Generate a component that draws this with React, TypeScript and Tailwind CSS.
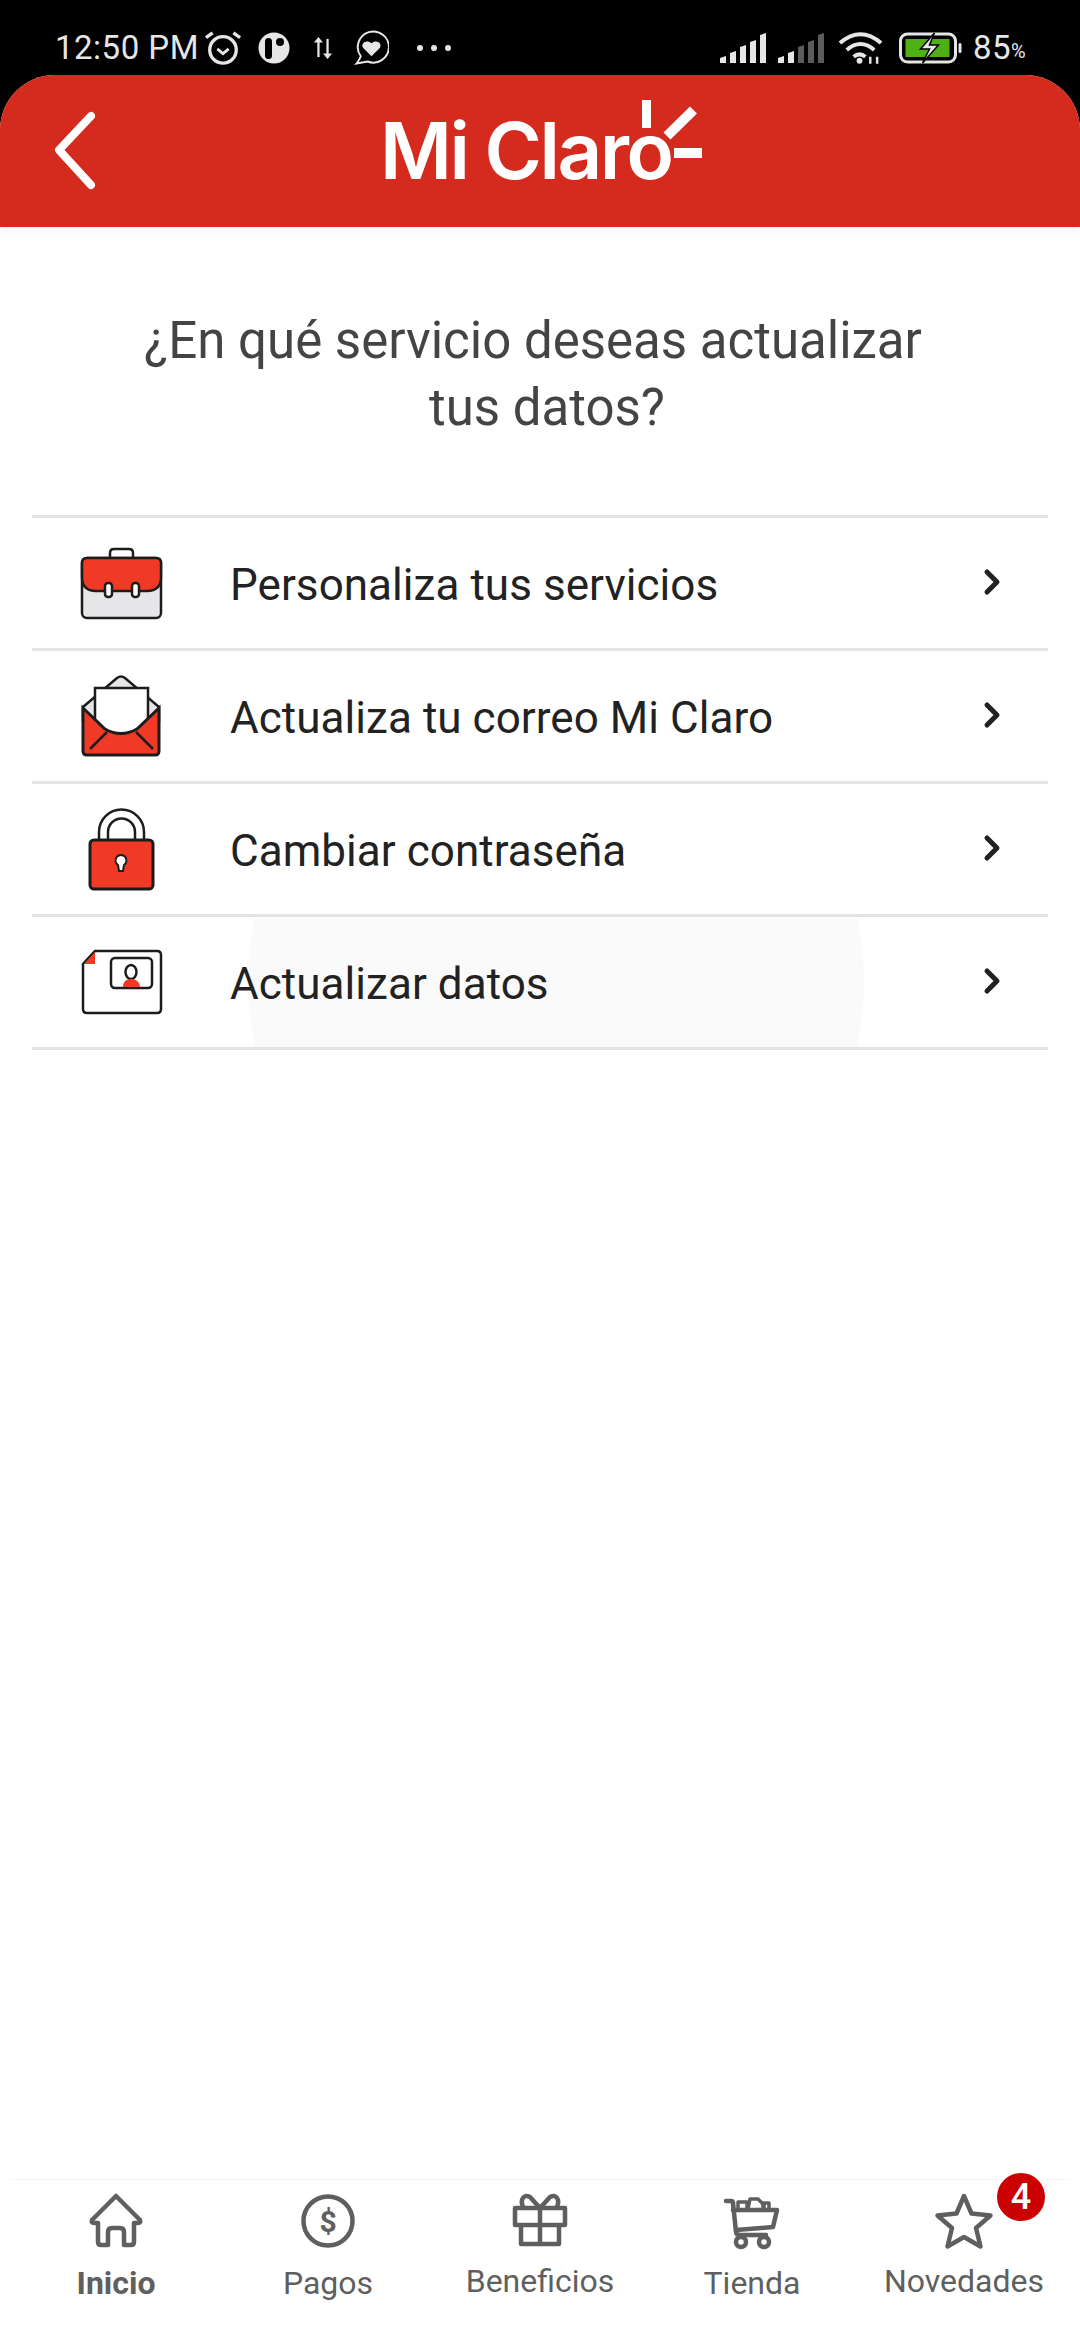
import type { ReactNode } from "react";

const RED = "#f03a26";
const INK = "#1c1c1c";

const bars = [
  { x: 0, top: 23 },
  { x: 10, top: 18 },
  { x: 20, top: 12 },
  { x: 30, top: 7 },
  { x: 40, top: 0 },
];

function Signal({ lit }: { lit: number }) {
  return (
    <svg width="46" height="30" viewBox="0 0 46 30">
      {bars.map((bar, i) => (
        <path
          key={bar.x}
          d={`M${bar.x} 30V${bar.top + 2}l6-2V30z`}
          fill={i < lit ? "#e6e6e6" : "#5c5c5c"}
        />
      ))}
    </svg>
  );
}

function StatusBar() {
  return (
    <div className="flex h-[75px] items-center bg-black pl-[55px] pt-[20px] text-[#e6e6e6]">
      <span className="w-[149px] text-[33px] leading-none tracking-[0.5px]">12:50 PM</span>
      <svg width="38" height="36" viewBox="0 0 40 38" fill="none" stroke="#e6e6e6">
        <circle cx="20" cy="21" r="14" strokeWidth="3.5" />
        <path d="M14 20l6 5 6-5" strokeWidth="3" />
        <path d="M2 8l7-5M38 8l-7-5" strokeWidth="3.5" />
      </svg>
      <svg className="ml-[16px]" width="32" height="32" viewBox="0 0 32 32">
        <circle cx="16" cy="16" r="15.5" fill="#e6e6e6" />
        <rect x="7" y="6" width="7" height="21" rx="3.5" fill="#000" />
        <circle cx="22" cy="10" r="4" fill="#000" />
      </svg>
      <svg className="ml-[23px]" width="20" height="26" viewBox="0 0 22 28" fill="none" stroke="#e6e6e6" strokeWidth="2.5">
        <path d="M6 24V4" />
        <path d="M1 8l5-6 5 6z" fill="#e6e6e6" strokeWidth="0" />
        <path d="M16 4v20" />
        <path d="M11 20l5 6 5-6z" fill="#e6e6e6" strokeWidth="0" />
      </svg>
      <svg className="ml-[21px]" width="35" height="35" viewBox="0 0 36 36" fill="none">
        <path d="M7 27A16 16 0 1 1 14 32.400L2.500 34.500Q5.500 31 7 27Z" stroke="#e6e6e6" strokeWidth="2" />
        <path d="M18 27L9.500 18.500C6.500 14 12.500 9 18 13.500C23.500 9 29.500 14 26.500 18.500Z" fill="#e6e6e6" />
      </svg>
      <div className="ml-[28px] flex gap-[8px]">
        <span className="size-[6px] rounded-full bg-[#e6e6e6]" />
        <span className="size-[6px] rounded-full bg-[#e6e6e6]" />
        <span className="size-[6px] rounded-full bg-[#e6e6e6]" />
      </div>
      <div className="ml-[269px] flex items-center">
        <Signal lit={5} />
        <span className="ml-[12px]">
          <Signal lit={2} />
        </span>
        <svg className="ml-[14px]" width="45" height="34" viewBox="0 0 46 34" fill="none" stroke="#e6e6e6" strokeWidth="4">
          <path d="M2 12Q23-6 44 12" />
          <path d="M9 19Q23 7 37 19" />
          <path d="M16 26Q22 21 28 26" />
          <circle cx="22" cy="30" r="2" fill="#e6e6e6" strokeWidth="2" />
          <path d="M33 33v-7M40 33v-7" strokeWidth="2.500" />
        </svg>
        <svg className="ml-[15px]" width="66" height="32" viewBox="0 0 65 32">
          <rect x="2" y="2" width="55" height="28" rx="7" fill="none" stroke="#e6e6e6" strokeWidth="3" />
          <rect x="7" y="7" width="44" height="18" fill="#4fb015" />
          <path d="M36 1L22 17h9l-7 14 16-18h-9l5-12z" fill="#e6e6e6" stroke="#000" strokeWidth="1.500" />
          <rect x="60" y="11" width="3" height="10" rx="1.500" fill="#e6e6e6" />
        </svg>
        <span className="ml-[9px] text-[33px] leading-none tracking-[0.5px]">85</span>
        <span className="mt-[7px] text-[20px] leading-none">%</span>
      </div>
    </div>
  );
}

function Header() {
  return (
    <header className="relative flex h-[152px] items-center rounded-t-[55px] bg-[#d42b1e] pl-[54px] shadow-[0_4px_8px_rgba(0,0,0,0.05)]">
      <svg width="46" height="80" viewBox="0 0 46 80" fill="none" stroke="#fff" strokeWidth="8" strokeLinecap="round" strokeLinejoin="round">
        <path d="M37 5L5 39l32 35" />
      </svg>
      <div className="relative ml-[280px] font-[Inter,sans-serif] text-[78px] font-semibold leading-none tracking-[-2.500px] text-white">
        Mi Claro
        <svg className="absolute left-[260px] top-[-12px]" width="66" height="60" viewBox="0 0 66 60" fill="#fff">
          <rect x="2" y="0" width="9" height="28" />
          <path d="M53.500 10L27 36" stroke="#fff" strokeWidth="10" />
          <rect x="34" y="48" width="28" height="10" />
        </svg>
      </div>
    </header>
  );
}

function IconBriefcase() {
  return (
    <svg width="90" height="90" viewBox="0 0 90 90" fill="none" stroke={INK} strokeWidth="2.500">
      <path d="M33 19v-4q0-4 4-4h15q4 0 4 4v4" fill="#fff" />
      <rect x="5" y="20" width="79" height="60" rx="5" fill="#e6e5e8" />
      <path d="M5 25q0-5 5-5h69q5 0 5 5v14q0 14-14 14H19Q5 53 5 39z" fill={RED} />
      <rect x="28" y="45" width="7" height="14" rx="3" fill="#fff" />
      <rect x="55" y="45" width="7" height="14" rx="3" fill="#fff" />
    </svg>
  );
}

function IconEnvelope() {
  return (
    <svg width="90" height="90" viewBox="0 0 90 90" fill="none" stroke={INK} strokeWidth="2.500">
      <path d="M6 36L40 7q4-3 8 0l34 29v14H6z" fill="#e6e5e8" />
      <path d="M18 17h53v52H18z" fill="#fff" />
      <path d="M6 37l22 21q16 9 32 0l22-21v43q0 4-4 4H10q-4 0-4-4z" fill={RED} stroke={INK} strokeWidth="3" />
      <path d="M13 78l17-17M76 78L59 61" strokeWidth="2.500" />
    </svg>
  );
}

function IconLock() {
  return (
    <svg width="90" height="90" viewBox="0 0 90 90" fill="none" stroke={INK} strokeWidth="2.500">
      <path d="M22 36V28a22 22 0 0 1 45 0v8" fill="#fff" />
      <path d="M31 36V28a13.500 13.500 0 0 1 27 0v8" />
      <rect x="13" y="36" width="63" height="49" rx="4" fill={RED} strokeWidth="3" />
      <path d="M41 61a5.500 5.500 0 1 1 6 0l-1 6h-4z" fill="#fff" strokeWidth="2" />
    </svg>
  );
}

function IconCard() {
  return (
    <svg width="90" height="90" viewBox="0 0 90 90" fill="none" stroke={INK} strokeWidth="2.500">
      <path d="M18 14h62q4 0 4 4v54q0 4-4 4H10q-4 0-4-4V27z" fill="#fff" />
      <path d="M18 15v12H7z" fill={RED} stroke="none" />
      <rect x="34" y="21" width="41" height="30" rx="4" />
      <ellipse cx="54" cy="35" rx="5.500" ry="7" />
      <path d="M46 50q0-8 8-8t9 8z" fill={RED} stroke="none" />
    </svg>
  );
}

const rows: { label: string; icon: ReactNode; ripple?: boolean }[] = [
  { label: "Personaliza tus servicios", icon: <IconBriefcase /> },
  { label: "Actualiza tu correo Mi Claro", icon: <IconEnvelope /> },
  { label: "Cambiar contraseña", icon: <IconLock /> },
  { label: "Actualizar datos", icon: <IconCard />, ripple: true },
];

function Row({ label, icon, ripple }: { label: string; icon: ReactNode; ripple?: boolean }) {
  return (
    <li className="relative flex h-[133px] items-center overflow-hidden border-b-[3px] border-[#e3e3e3] pl-[45px]">
      {ripple && <span className="absolute left-[216px] top-[-243px] size-[616px] rounded-full bg-[#fafafa]" />}
      <span className="relative">{icon}</span>
      <span className="relative ml-[63px] mt-[4px] text-[44px] leading-none tracking-[0.05px] text-[#222222]">{label}</span>
      <svg className="absolute left-[950px] top-[50px]" width="20" height="28" viewBox="0 0 20 28" fill="none" stroke="#222222" strokeWidth="5" strokeLinecap="round" strokeLinejoin="round">
        <path d="M5 4l10 10L5 24" />
      </svg>
    </li>
  );
}

const GRAY = "#5f5f5f";

function HomeIcon() {
  return (
    <svg width="60" height="60" viewBox="0 0 60 60" fill="none" stroke={GRAY} strokeWidth="4.500" strokeLinejoin="round">
      <path d="M30 6L6 30q-1 3 2 3h4v19q0 3 3 3h7V42q0-4 4-4h8q4 0 4 4v13h7q3 0 3-3V33h4q3 0 2-3z" />
    </svg>
  );
}

function PagosIcon() {
  return (
    <svg width="60" height="60" viewBox="0 0 60 60" fill="none" stroke={GRAY} strokeWidth="4.500">
      <circle cx="30" cy="31" r="24.500" />
      <text x="30" y="42" textAnchor="middle" fontSize="30" fontWeight="700" fill={GRAY} stroke="none" className="font-[Roboto,sans-serif]">$</text>
    </svg>
  );
}

function GiftIcon() {
  return (
    <svg width="60" height="60" viewBox="0 0 60 60" fill="none" stroke={GRAY} strokeWidth="4.500" strokeLinejoin="round">
      <rect x="5" y="18" width="50" height="17" />
      <path d="M11 35v19h38V35M30 18v36" />
      <path d="M30 18L20 7q-6-3-8 3-1 4 2 8M30 18L40 7q6-3 8 3 1 4-2 8" />
    </svg>
  );
}

function CartIcon() {
  return (
    <svg width="60" height="60" viewBox="0 0 60 60" fill="none" stroke={GRAY} strokeWidth="4.500" strokeLinecap="round" strokeLinejoin="round">
      <g transform="translate(-6 0)">
        <path d="M10 11h5q2 0 2 2l3 29q0 3 5 3h25" />
        <path d="M17 20h44l-4 17-37 3" />
        <circle cx="25" cy="52" r="5" />
        <circle cx="48" cy="52" r="5" />
        <path d="M22 19v-7h9v7M32 19l2-10h8l5 5v5M48 19v-6h5v6" strokeWidth="3.500" />
      </g>
    </svg>
  );
}

function StarIcon() {
  return (
    <svg width="60" height="60" viewBox="0 0 60 60" fill="none" stroke={GRAY} strokeWidth="4.500" strokeLinejoin="round">
      <path d="M30 6l7.500 17.500 19 2-14.500 12.500 4.500 18.500L30 47l-16.500 9.500L18 38 3.500 25.500l19-2z" />
    </svg>
  );
}

function NavItem({ label, icon, bold, raised, badge }: { label: string; icon: ReactNode; bold?: boolean; raised?: boolean; badge?: string }) {
  return (
    <div className="relative flex flex-col items-center">
      {icon}
      {badge && (
        <span className="absolute left-[139px] top-[-17px] flex size-[48px] items-center justify-center rounded-full bg-[#cc0000] text-[36px] font-medium leading-none text-white ring-2 ring-white">
          {badge}
        </span>
      )}
      <span className={`${raised ? "mt-[11px]" : "mt-[13px]"} text-[32px] leading-[40px] text-[#5f5f5f] ${bold ? "font-bold" : ""}`}>{label}</span>
    </div>
  );
}

export default function App() {
  return (
    <div className="flex h-[2340px] w-[1080px] flex-col overflow-hidden bg-black font-[Roboto,sans-serif]">
      <StatusBar />
      <div className="flex flex-1 flex-col rounded-t-[55px] bg-white">
        <Header />
        <h1 className="pt-[80px] text-center text-[51px] font-normal leading-[67px] text-[#444444]">
          <span className="block pr-[14px]">¿En qué servicio deseas actualizar</span>
          <span className="block pl-[14px]">tus datos?</span>
        </h1>
        <ul className="mx-[32px] mt-[74px] border-t-[3px] border-[#e3e3e3]">
          {rows.map((row) => (
            <Row key={row.label} {...row} />
          ))}
        </ul>
        <nav className="mx-[10px] mt-auto grid h-[161px] grid-cols-5 border-t border-[#f5f5f5] pt-[10px]">
          <NavItem label="Inicio" icon={<HomeIcon />} bold />
          <NavItem label="Pagos" icon={<PagosIcon />} />
          <NavItem label="Beneficios" icon={<GiftIcon />} raised />
          <NavItem label="Tienda" icon={<CartIcon />} />
          <NavItem label="Novedades" icon={<StarIcon />} raised badge="4" />
        </nav>
      </div>
    </div>
  );
}
